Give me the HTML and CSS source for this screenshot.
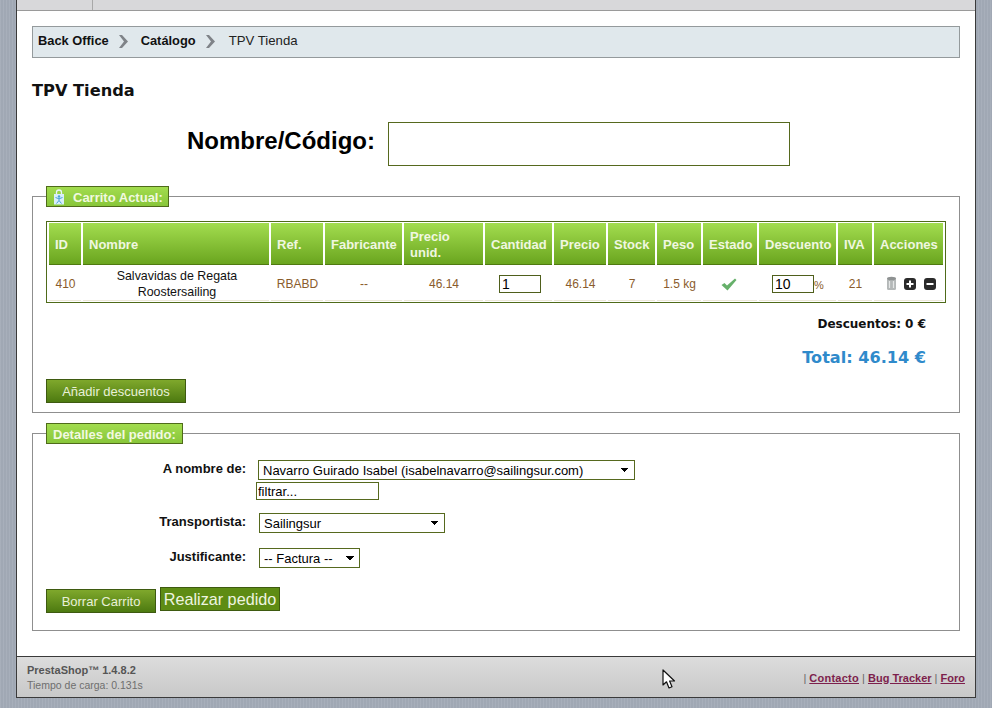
FILE: index.html
```html
<!DOCTYPE html>
<html lang="es">
<head>
<meta charset="utf-8">
<title>TPV Tienda</title>
<link rel="stylesheet" href="styles.css">
</head>
<body>
<div class="wrapper">
  <div class="topbar"><div class="tab"></div></div>
  <main class="content">
    <nav class="crumbs">
      <a class="crumb">Back Office</a>
      <svg class="sep" width="11" height="15" viewBox="0 0 11 15"><path d="M1 1 L4 1 L10 7.5 L4 14 L1 14 L6 7.5 Z" fill="#7f8388"/></svg>
      <a class="crumb">Catálogo</a>
      <svg class="sep sep-last" width="11" height="15" viewBox="0 0 11 15"><path d="M1 1 L4 1 L10 7.5 L4 14 L1 14 L6 7.5 Z" fill="#7f8388"/></svg>
      <span class="crumb-last">TPV Tienda</span>
    </nav>
    <h1 class="title">TPV Tienda</h1>
    <div class="search">
      <label class="search-label">Nombre/Código:</label>
      <input class="search-input" type="text">
    </div>

    <fieldset class="box box-cart">
      <legend class="legend legend-cart">
        <svg class="bag" width="12" height="16" viewBox="0 0 12 16"><path d="M3.5 5 V3.5 a2.5 2.5 0 0 1 5 0 V5" fill="none" stroke="#e8f4fa" stroke-width="1.3"/><rect x="1" y="5" width="10" height="10.5" fill="#d8eefa"/><circle cx="6" cy="7.5" r="1.2" fill="#4aa0d8"/><path d="M2.5 8.5 L6 9.8 L9.5 8.5 M6 9.8 V11.5 L3.5 14.5 M6 11.5 L8.5 14.5" fill="none" stroke="#4aa0d8" stroke-width="1"/></svg>
        Carrito Actual:
      </legend>
      <table class="cart">
        <thead>
          <tr>
            <th class="c-id">ID</th>
            <th class="c-name">Nombre</th>
            <th class="c-ref">Ref.</th>
            <th class="c-fab">Fabricante</th>
            <th class="c-unit">Precio<br>unid.</th>
            <th class="c-qty">Cantidad</th>
            <th class="c-price">Precio</th>
            <th class="c-stock">Stock</th>
            <th class="c-weight">Peso</th>
            <th class="c-state">Estado</th>
            <th class="c-disc">Descuento</th>
            <th class="c-iva">IVA</th>
            <th class="c-act">Acciones</th>
          </tr>
        </thead>
        <tbody>
          <tr>
            <td>410</td>
            <td class="prod">Salvavidas de Regata Roostersailing</td>
            <td>RBABD</td>
            <td>--</td>
            <td>46.14</td>
            <td><input class="cell-input qty" type="text" value="1"></td>
            <td>46.14</td>
            <td>7</td>
            <td>1.5 kg</td>
            <td><svg class="icon-check" width="16" height="13" viewBox="0 0 16 13"><path d="M0.5 7 L3.5 5 L6 7.5 L14 0.5 L15.5 2 L6.5 12.5 Z" fill="#66b06a"/></svg></td>
            <td class="disc-cell"><input class="cell-input disc" type="text" value="10"><span class="pct">%</span></td>
            <td>21</td>
            <td class="actions">
              <svg class="trash" width="11" height="15" viewBox="0 0 11 15"><rect x="1" y="2" width="9" height="12" rx="1.5" fill="#b4b8b8"/><ellipse cx="5.5" cy="2.5" rx="4.5" ry="1.8" fill="#8e9292"/><path d="M3.5 5 V12 M7.5 5 V12" stroke="#e4e6e6" stroke-width="1.2"/></svg>
              <svg width="12" height="12" viewBox="0 0 12 12"><rect width="12" height="12" rx="3" fill="#2a2a2a"/><path d="M6 2.5 V9.5 M2.5 6 H9.5" stroke="#fff" stroke-width="2"/></svg>
              <svg width="12" height="12" viewBox="0 0 12 12"><rect width="12" height="12" rx="3" fill="#2a2a2a"/><path d="M2.5 6 H9.5" stroke="#fff" stroke-width="2"/></svg>
            </td>
          </tr>
        </tbody>
      </table>
      <p class="discounts">Descuentos: 0 €</p>
      <p class="total">Total: 46.14 €</p>
      <button class="btn btn-add" type="button">Añadir descuentos</button>
    </fieldset>

    <fieldset class="box box-order">
      <legend class="legend">Detalles del pedido:</legend>
      <div class="row row-name">
        <label class="row-label">A nombre de:</label>
        <div class="stack">
          <select class="sel sel-name"><option>Navarro Guirado Isabel (isabelnavarro@sailingsur.com)</option></select>
          <input class="filter" type="text" value="filtrar...">
        </div>
      </div>
      <div class="row row-carrier">
        <label class="row-label">Transportista:</label>
        <select class="sel sel-carrier"><option>Sailingsur</option></select>
      </div>
      <div class="row row-doc">
        <label class="row-label">Justificante:</label>
        <select class="sel sel-doc"><option>-- Factura --</option></select>
      </div>
      <div class="order-actions">
        <button class="btn btn-clear" type="button">Borrar Carrito</button>
        <button class="btn-submit" type="button">Realizar pedido</button>
      </div>
    </fieldset>
  </main>
  <footer class="footer">
    <div class="foot-left">
      <div class="foot-brand">PrestaShop™ 1.4.8.2</div>
      <div class="foot-time">Tiempo de carga: 0.131s</div>
    </div>
    <div class="foot-links">| <a class="foot-first">Contacto</a> | <a>Bug Tracker</a> | <a>Foro</a></div>
  </footer>
</div>
<svg class="cursor" width="14" height="21" viewBox="0 0 14 21"><path d="M1 1 V16 L4.5 12.8 L7 19 L10 17.8 L7.6 12 L12.5 12 Z" fill="#fff" stroke="#111" stroke-width="1.2" stroke-linejoin="round"/></svg>
</body>
</html>
```

FILE: styles.css
```css
* { box-sizing: border-box; }
html, body { margin: 0; height: 100%; }
body {
  position: relative;
  height: 708px;
  overflow: hidden;
  font-family: "Liberation Sans", Arial, sans-serif;
  color: #000;
  background-color: #a4acb8;
  background-image: repeating-linear-gradient(90deg, rgba(255,255,255,.04) 0 1px, rgba(0,0,0,.025) 1px 3px);
}
.wrapper {
  width: 960px;
  height: 698px;
  margin: 0 auto;
  display: flex;
  flex-direction: column;
  border-right: 1px solid #3a3a3a;
  border-left: 1px solid #3a3a3a;
  border-bottom: 1px solid #3a3a3a;
  background: #fff;
}
.topbar { height: 11px; background: #d8d8da; border-bottom: 1px solid #9a9a9a; flex: none; }
.tab { width: 76px; height: 10px; border-right: 1px solid #a8a8a8; }
.content { flex: 1; padding: 15px 15px 0; }
.crumbs {
  height: 32px;
  display: flex;
  align-items: center;
  padding: 0 0 3px 5px;
  background: #e0e8ec;
  border: 1px solid #949a9c;
  font-size: 12.85px;
}
.crumb { font-weight: bold; color: #111; }
.crumb-last { color: #222; font-size: 13.2px; }
.sep { margin: 2px 12px 0 9px; }
.sep-last { margin-right: 13px; }
.title {
  font-family: "DejaVu Sans", sans-serif;
  font-size: 16.2px;
  line-height: 20px;
  font-weight: bold;
  margin: 23px 0 0;
  color: #111;
}
.search { display: flex; align-items: center; margin: 21px 0 0 155px; }
.search-label { font-size: 24px; line-height: 28px; font-weight: bold; width: 201px; color: #000; padding-bottom: 6px; }
.search-input { width: 402px; height: 44px; border: 1px solid #56691e; background: #fff; }
.box {
  margin: 0;
  padding: 0 13px;
  border: 1px solid #8f8f8f;
  min-width: 0;
}
.box-cart { height: 227px; margin-top: 20px; }
.box-order { height: 208px; margin-top: 10px; }
.legend {
  height: 21px;
  margin: 0;
  padding: 1px 6px 0;
  display: flex;
  align-items: center;
  background: linear-gradient(#a2dc4e, #88c63a);
  border: 1px solid #4f6b1a;
  color: #f2f9e0;
  font-size: 13px;
  font-weight: bold;
}
.legend-cart { gap: 8px; padding-right: 5px; }
.cart {
  width: 899px;
  margin: 14px 0 0;
  table-layout: fixed;
  border: 1px solid #4f6b1a;
  border-collapse: separate;
  border-spacing: 2px 0;
  padding: 1px 0;
}
.cart th {
  height: 42px;
  padding: 2px 0 0 6px;
  background: linear-gradient(#a3dd4f, #6aa51f);
  border-bottom: 1px solid #4f7a10;
  color: #f0f7e0;
  font-size: 13px;
  line-height: 15px;
  font-weight: bold;
  text-align: left;
}
.cart th.c-unit { line-height: 16px; }
.c-id { width: 32px; }
.c-name { width: 186px; }
.c-ref { width: 52px; }
.c-fab { width: 77px; }
.c-unit { width: 79px; }
.c-qty { width: 67px; }
.c-price { width: 52px; }
.c-stock { width: 47px; }
.c-weight { width: 44px; }
.c-state { width: 54px; }
.c-disc { width: 77px; }
.c-iva { width: 34px; }
.c-act { width: 69px; }
.cart td {
  height: 36px;
  padding: 2px 0 0 1px;
  text-align: center;
  font-size: 12px;
  color: #8a5c2c;
  border-bottom: 1px solid #ece8d8;
}
.cart td.prod { color: #111; font-size: 12.4px; line-height: 16px; padding: 3px 0 0 2px; vertical-align: top; }
.cell-input {
  height: 18px;
  border: 1px solid #4f5f1c;
  padding: 0 2px;
  font: 14px "Liberation Sans", sans-serif;
  color: #000;
  vertical-align: middle;
}
.qty { width: 42px; margin-left: 2px; }
.disc { width: 42px; }
.pct { font-size: 11px; vertical-align: -2px; }
.icon-check { margin-right: 3px; vertical-align: middle; }
.cart td.disc-cell { white-space: nowrap; text-align: left; padding-left: 13px; }
.cart td.actions { white-space: nowrap; text-align: left; padding-left: 12px; }
.actions svg { vertical-align: middle; margin-right: 4px; }
.discounts {
  margin: 14px 20px 0 0;
  text-align: right;
  font-family: "DejaVu Sans", sans-serif;
  font-size: 12px;
  line-height: 15px;
  font-weight: bold;
  color: #111;
}
.total {
  margin: 16px 20px 0 0;
  text-align: right;
  font-family: "DejaVu Sans", sans-serif;
  font-size: 16.1px;
  line-height: 20px;
  font-weight: bold;
  color: #2f8acb;
}
.btn {
  display: block;
  height: 24px;
  border: 1px solid #3e5a10;
  background: linear-gradient(#7fa82c, #4d7a10);
  color: #e8f0d8;
  font: 13px "Liberation Sans", sans-serif;
  padding: 0;
}
.btn-add { width: 140px; margin-top: 11px; }
.row { display: flex; align-items: flex-start; }
.row-label { width: 200px; text-align: right; font-size: 13px; font-weight: bold; color: #111; margin-right: 13px; padding-top: 1px; }
.stack { display: flex; flex-direction: column; align-items: flex-start; margin-left: -1px; }
.sel {
  appearance: none;
  height: 20px;
  border: 1px solid #56691e;
  background-color: #fff;
  background-image: linear-gradient(45deg, transparent 50%, #000 50%), linear-gradient(-45deg, transparent 50%, #000 50%);
  background-repeat: no-repeat;
  background-size: 4px 4px, 4px 4px;
  background-position: right 9px top 7px, right 5px top 7px;
  font: 13px "Liberation Sans", sans-serif;
  color: #000;
  padding: 1px 0 0 4px;
  border-radius: 0;
}
.sel-name { width: 377px; }
.sel-carrier { width: 186px; }
.sel-doc { width: 101px; }
.filter {
  width: 123px;
  height: 18px;
  margin: 2px 0 0 -2px;
  border: 1px solid #56691e;
  padding: 0 0 0 1px;
  font: 13px "Liberation Sans", sans-serif;
  color: #000;
}
.row-name { margin-top: 16px; }
.row-carrier { margin-top: 13px; }
.row-doc { margin-top: 15px; }
.order-actions { display: flex; align-items: flex-start; gap: 4px; margin-top: 19px; }
.btn-clear { width: 110px; margin-top: 2px; }
.btn-submit {
  width: 120px;
  height: 24px;
  border: 1px solid #3e5a10;
  background: #5e8c14;
  color: #eef5e0;
  font: 16.2px "Liberation Sans", sans-serif;
  padding: 0;
}
.footer {
  flex: none;
  height: 41px;
  display: flex;
  justify-content: space-between;
  align-items: center;
  padding: 1px 10px 0;
  border-top: 1px solid #3a3a3a;
  background: linear-gradient(#dcdcdc, #c8c8c8);
  font-size: 11px;
  color: #666;
}
.foot-brand { font-weight: bold; color: #555; line-height: 15px; }
.foot-time { line-height: 14px; font-size: 10.5px; color: #6e6e6e; }
.foot-links { color: #666; }
.foot-links a { font-weight: bold; color: #7d1f4c; text-decoration: underline; }
.foot-first { letter-spacing: .25px; }
.cursor { position: absolute; left: 662px; top: 669px; }
```
